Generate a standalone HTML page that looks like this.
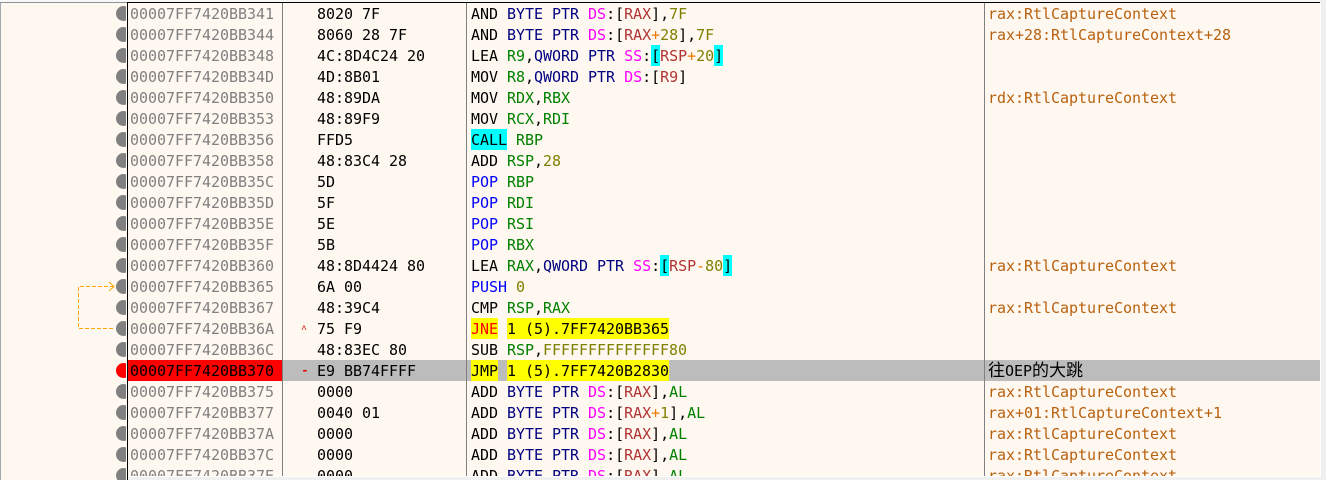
<!DOCTYPE html>
<html><head><meta charset="utf-8">
<style>
html,body{margin:0;padding:0;background:#f0f0f0}
#w{position:relative;width:1326px;height:480px;overflow:hidden;background:#f0f0f0;font:15px/23px "DejaVu Sans Mono","Noto Sans CJK SC",monospace;letter-spacing:-.03px;color:#000}
.a{position:absolute}
#side{left:1px;top:3px;width:126px;height:477px;background:#fff8f0;overflow:hidden}
#main{left:128px;top:3px;width:1192px;height:473px;background:#fff8f0;overflow:hidden}
.r{position:absolute;left:0;width:1192px;height:21px;white-space:pre}
.r>span{position:absolute;top:0;height:21px;line-height:23px}
.ad{left:2px;color:#808080}
.by{left:189px}
.as{left:343px}
.cm{left:860px;color:#b8610f}
.r>.ca{left:173px;color:#d00000;font:10px/25px "Liberation Mono",monospace}
.r>.mi{left:173px;color:#e00000;font:bold 13px/21px "Liberation Mono",monospace}
i{font-style:normal}
.k{font:17px/0 "Noto Sans CJK SC",sans-serif;letter-spacing:0}
.b{color:#00f}.z{color:#000080}.s{color:#f0f}.g{color:#008000}.m{color:#b03434}.p{color:#f07800}.n{color:#808000}.e{color:#f00}
.y{background:#ff0;display:inline-block;height:21px}.c{background:#0ff;display:inline-block;height:21px}
.v{position:absolute;top:0;width:1px;height:473px;background:#808080}
.d{position:absolute;left:115px;width:15px;height:15px;border-radius:50%;background:#808080}
</style></head><body>
<div id="w">
<div class="a" style="left:0;top:0;width:1320px;height:2px;background:#f8f8f8"></div>
<div class="a" id="side">
<div class="d" style="top:3px"></div><div class="d" style="top:24px"></div><div class="d" style="top:45px"></div><div class="d" style="top:66px"></div><div class="d" style="top:87px"></div><div class="d" style="top:108px"></div><div class="d" style="top:129px"></div><div class="d" style="top:150px"></div><div class="d" style="top:171px"></div><div class="d" style="top:192px"></div><div class="d" style="top:213px"></div><div class="d" style="top:234px"></div><div class="d" style="top:255px"></div><div class="d" style="top:276px"></div><div class="d" style="top:297px"></div><div class="d" style="top:318px"></div><div class="d" style="top:339px"></div><div class="d" style="top:360px;background:#f00"></div><div class="d" style="top:381px"></div><div class="d" style="top:402px"></div><div class="d" style="top:423px"></div><div class="d" style="top:444px"></div><div class="d" style="top:465px"></div>
</div>
<div class="a" style="left:126px;top:3px;width:1px;height:477px;background:#fff8f0"></div>
<div class="a" style="left:0;top:2px;width:1px;height:478px;background:#a0a8b0"></div>
<div class="a" style="left:0;top:2px;width:127px;height:1px;background:#8c949c"></div>
<svg class="a" style="left:70px;top:275px" width="50" height="60" fill="none" stroke="#ffa500" stroke-width="1">
<path d="M44 11.5H8.5V53.5H45" stroke-dasharray="4 2"/><path d="M39 7l5 4.5-5 4.5"/></svg>
<div class="a" id="main">
<div class="r" style="top:357px;background:#bcbcbc"></div>
<div class="a" style="left:0;top:357px;width:154px;height:21px;background:#f00"></div>
<div class="v" style="left:154px"></div><div class="v" style="left:338px"></div><div class="v" style="left:856px"></div>
<div class="r" style="top:0"><span class="ad">00007FF7420BB341</span><span class="by">8020 7F</span><span class="as">AND <i class="z">BYTE PTR</i> <i class="s">DS</i>:[<i class="m">RAX</i>],<i class="n">7F</i></span><span class="cm">rax:RtlCaptureContext</span></div>
<div class="r" style="top:21px"><span class="ad">00007FF7420BB344</span><span class="by">8060 28 7F</span><span class="as">AND <i class="z">BYTE PTR</i> <i class="s">DS</i>:[<i class="m">RAX</i><i class="p">+</i><i class="n">28</i>],<i class="n">7F</i></span><span class="cm">rax+28:RtlCaptureContext+28</span></div>
<div class="r" style="top:42px"><span class="ad">00007FF7420BB348</span><span class="by">4C:8D4C24 20</span><span class="as">LEA <i class="g">R9</i>,<i class="z">QWORD PTR</i> <i class="s">SS</i>:<i class="c">[</i><i class="m">RSP</i><i class="p">+</i><i class="n">20</i><i class="c">]</i></span></div>
<div class="r" style="top:63px"><span class="ad">00007FF7420BB34D</span><span class="by">4D:8B01</span><span class="as">MOV <i class="g">R8</i>,<i class="z">QWORD PTR</i> <i class="s">DS</i>:[<i class="m">R9</i>]</span></div>
<div class="r" style="top:84px"><span class="ad">00007FF7420BB350</span><span class="by">48:89DA</span><span class="as">MOV <i class="g">RDX</i>,<i class="g">RBX</i></span><span class="cm">rdx:RtlCaptureContext</span></div>
<div class="r" style="top:105px"><span class="ad">00007FF7420BB353</span><span class="by">48:89F9</span><span class="as">MOV <i class="g">RCX</i>,<i class="g">RDI</i></span></div>
<div class="r" style="top:126px"><span class="ad">00007FF7420BB356</span><span class="by">FFD5</span><span class="as"><i class="c">CALL</i> <i class="g">RBP</i></span></div>
<div class="r" style="top:147px"><span class="ad">00007FF7420BB358</span><span class="by">48:83C4 28</span><span class="as">ADD <i class="g">RSP</i>,<i class="n">28</i></span></div>
<div class="r" style="top:168px"><span class="ad">00007FF7420BB35C</span><span class="by">5D</span><span class="as"><i class="b">POP</i> <i class="g">RBP</i></span></div>
<div class="r" style="top:189px"><span class="ad">00007FF7420BB35D</span><span class="by">5F</span><span class="as"><i class="b">POP</i> <i class="g">RDI</i></span></div>
<div class="r" style="top:210px"><span class="ad">00007FF7420BB35E</span><span class="by">5E</span><span class="as"><i class="b">POP</i> <i class="g">RSI</i></span></div>
<div class="r" style="top:231px"><span class="ad">00007FF7420BB35F</span><span class="by">5B</span><span class="as"><i class="b">POP</i> <i class="g">RBX</i></span></div>
<div class="r" style="top:252px"><span class="ad">00007FF7420BB360</span><span class="by">48:8D4424 80</span><span class="as">LEA <i class="g">RAX</i>,<i class="z">QWORD PTR</i> <i class="s">SS</i>:<i class="c">[</i><i class="m">RSP</i><i class="p">-</i><i class="n">80</i><i class="c">]</i></span><span class="cm">rax:RtlCaptureContext</span></div>
<div class="r" style="top:273px"><span class="ad">00007FF7420BB365</span><span class="by">6A 00</span><span class="as"><i class="b">PUSH</i> <i class="n">0</i></span></div>
<div class="r" style="top:294px"><span class="ad">00007FF7420BB367</span><span class="by">48:39C4</span><span class="as">CMP <i class="g">RSP</i>,<i class="g">RAX</i></span><span class="cm">rax:RtlCaptureContext</span></div>
<div class="r" style="top:315px"><span class="ad">00007FF7420BB36A</span><span class="ca">^</span><span class="by">75 F9</span><span class="as"><i class="y e">JNE</i> <i class="y">1 (5).7FF7420BB365</i></span></div>
<div class="r" style="top:336px"><span class="ad">00007FF7420BB36C</span><span class="by">48:83EC 80</span><span class="as">SUB <i class="g">RSP</i>,<i class="n">FFFFFFFFFFFFFF80</i></span></div>
<div class="r" style="top:357px"><span class="ad" style="color:#000">00007FF7420BB370</span><span class="mi">-</span><span class="by">E9 BB74FFFF</span><span class="as"><i class="y">JMP</i> <i class="y">1 (5).7FF7420B2830</i></span><span class="cm" style="color:#000"><i class="k">往</i>OEP<i class="k">的大跳</i></span></div>
<div class="r" style="top:378px"><span class="ad">00007FF7420BB375</span><span class="by">0000</span><span class="as">ADD <i class="z">BYTE PTR</i> <i class="s">DS</i>:[<i class="m">RAX</i>],<i class="g">AL</i></span><span class="cm">rax:RtlCaptureContext</span></div>
<div class="r" style="top:399px"><span class="ad">00007FF7420BB377</span><span class="by">0040 01</span><span class="as">ADD <i class="z">BYTE PTR</i> <i class="s">DS</i>:[<i class="m">RAX</i><i class="p">+</i><i class="n">1</i>],<i class="g">AL</i></span><span class="cm">rax+01:RtlCaptureContext+1</span></div>
<div class="r" style="top:420px"><span class="ad">00007FF7420BB37A</span><span class="by">0000</span><span class="as">ADD <i class="z">BYTE PTR</i> <i class="s">DS</i>:[<i class="m">RAX</i>],<i class="g">AL</i></span><span class="cm">rax:RtlCaptureContext</span></div>
<div class="r" style="top:441px"><span class="ad">00007FF7420BB37C</span><span class="by">0000</span><span class="as">ADD <i class="z">BYTE PTR</i> <i class="s">DS</i>:[<i class="m">RAX</i>],<i class="g">AL</i></span><span class="cm">rax:RtlCaptureContext</span></div>
<div class="r" style="top:462px"><span class="ad">00007FF7420BB37E</span><span class="by">0000</span><span class="as">ADD <i class="z">BYTE PTR</i> <i class="s">DS</i>:[<i class="m">RAX</i>],<i class="g">AL</i></span><span class="cm">rax:RtlCaptureContext</span></div>
</div>
<div class="a" style="left:127px;top:2px;width:1193px;height:1px;background:#000"></div>
<div class="a" style="left:127px;top:2px;width:1px;height:478px;background:#000"></div>
<div class="a" style="left:128px;top:476px;width:1193px;height:1px;background:#fff"></div>
<div class="a" style="left:1320px;top:3px;width:1px;height:474px;background:#fff"></div>
</div>
</body></html>
